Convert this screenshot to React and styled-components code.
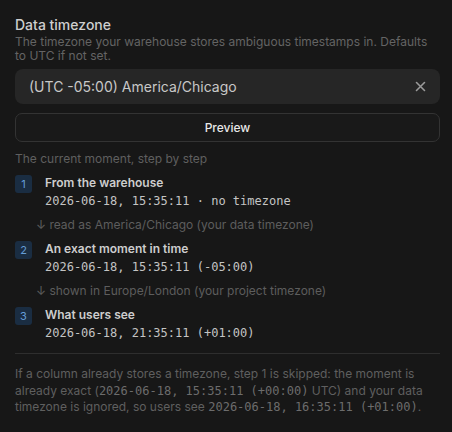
import styled, { createGlobalStyle } from 'styled-components'

const GlobalStyle = createGlobalStyle`
  html, body {
    margin: 0;
    background: #171717;
  }
  body {
    font-family: Inter, "Noto Sans", sans-serif;
    -webkit-font-smoothing: antialiased;
  }
`

const Panel = styled.div`
  width: 452px;
  min-height: 432px;
  box-sizing: border-box;
  padding: 16px 12px 0 15px;
  background: #171717;
  display: flex;
  flex-direction: column;
  & > * { flex-shrink: 0; }
`

const Label = styled.div`
  font-size: 14px;
  font-weight: 500;
  color: #cfcfcf;
  line-height: 18px;
`

const Help = styled.div`
  font-size: 12px;
  line-height: 14px;
  color: #646464;
  margin-top: 1px;
`

const Select = styled.div`
  margin-top: 6px;
  height: 35px;
  border-radius: 8px;
  background: #262626;
  display: flex;
  align-items: center;
  justify-content: space-between;
  padding: 0 14px 0 14px;
  font-size: 14px;
  color: #c8c8c8;
`

const Button = styled.button`
  margin-top: 9px;
  height: 29px;
  border-radius: 7px;
  border: 1px solid #333;
  background: #191919;
  color: #e8e8e8;
  font-family: Inter, sans-serif;
  font-size: 12px;
  font-weight: 500;
`

const Caption = styled.div`
  margin-top: 9px;
  font-size: 12px;
  color: #5f5f5f;
  line-height: 16px;
`

const Steps = styled.div`
  margin-top: 8px;
  display: flex;
  flex-direction: column;
`

const Step = styled.div`
  display: flex;
  gap: 13px;
`

const Badge = styled.div`
  width: 17px;
  height: 18px;
  border-radius: 3px;
  background: #1a2d42;
  color: #669dd6;
  font-size: 11px;
  display: flex;
  align-items: center;
  justify-content: center;
  flex-shrink: 0;
`

const StepBody = styled.div`
  display: flex;
  flex-direction: column;
`

const StepTitle = styled.div`
  font-size: 12px;
  font-weight: 600;
  color: #cdcdcd;
  line-height: 16px;
`

const Mono = styled.span`
  font-family: "DejaVu Sans Mono", monospace;
  font-size: 12px;
  color: ${p => p.$dim ? '#6c6c6c' : '#c4c4c4'};
`

const StepValue = styled.div`
  line-height: 17px;
`

const Arrow = styled.div`
  font-size: 12px;
  color: #5d5d5d;
  padding-left: 21px;
  margin: 7px 0 8px;
  line-height: 16px;
`

const Divider = styled.hr`
  border: 0;
  border-top: 1px solid #2e2e2e;
  margin: 11px 0 0;
`

const Note = styled.p`
  margin: 12px 0 0;
  font-size: 12px;
  line-height: 16.5px;
  color: #5f5f5f;
`

function ClearIcon() {
  return (
    <svg width="11" height="11" viewBox="0 0 11 11" fill="none" stroke="#9a9a9a" strokeWidth="1.6" strokeLinecap="round">
      <path d="M1.5 1.5l8 8M9.5 1.5l-8 8" />
    </svg>
  )
}

const steps = [
  { n: 1, title: 'From the warehouse', value: '2026-06-18, 15:35:11 · no timezone', arrow: 'read as America/Chicago (your data timezone)' },
  { n: 2, title: 'An exact moment in time', value: '2026-06-18, 15:35:11 (-05:00)', arrow: 'shown in Europe/London (your project timezone)' },
  { n: 3, title: 'What users see', value: '2026-06-18, 21:35:11 (+01:00)' },
]

function App() {
  return (
    <>
      <GlobalStyle />
      <Panel>
        <Label>Data timezone</Label>
        <Help>The timezone your warehouse stores ambiguous timestamps in. Defaults to UTC if not set.</Help>
        <Select>
          <span>(UTC -05:00) America/Chicago</span>
          <ClearIcon />
        </Select>
        <Button>Preview</Button>
        <Caption>The current moment, step by step</Caption>
        <Steps>
          {steps.map(s => (
            <div key={s.n}>
              <Step>
                <Badge>{s.n}</Badge>
                <StepBody>
                  <StepTitle>{s.title}</StepTitle>
                  <StepValue><Mono>{s.value}</Mono></StepValue>
                </StepBody>
              </Step>
              {s.arrow && <Arrow>↓ {s.arrow}</Arrow>}
            </div>
          ))}
        </Steps>
        <Divider />
        <Note>
          If a column already stores a timezone, step 1 is skipped: the moment is already exact (<Mono $dim>2026-06-18, 15:35:11 (+00:00)</Mono> UTC) and your data timezone is ignored, so users see <Mono $dim>2026-06-18, 16:35:11 (+01:00)</Mono>.
        </Note>
      </Panel>
    </>
  )
}

export default App
